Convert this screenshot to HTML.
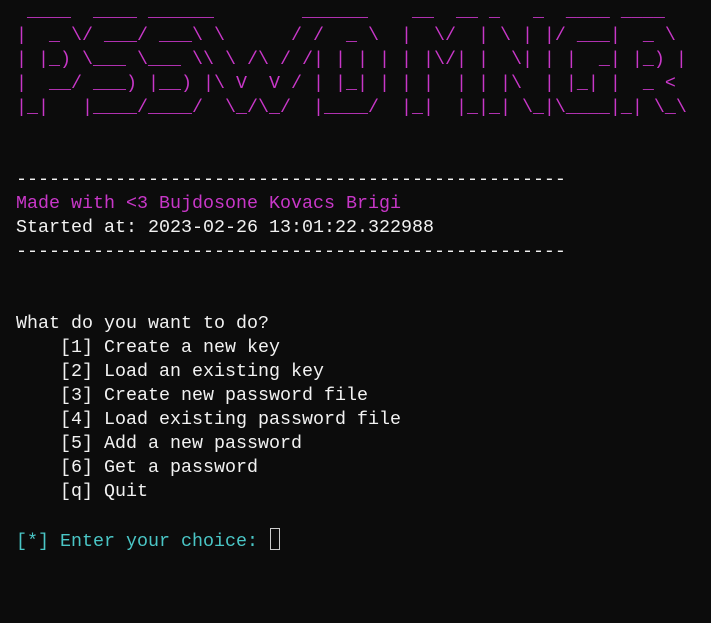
<!DOCTYPE html>
<html><head><meta charset="utf-8"><style>
html,body{margin:0;padding:0;background:#0c0c0c;width:711px;height:623px;overflow:hidden}
pre{margin:0;position:absolute;left:16px;top:0px;font-family:"Liberation Mono",monospace;font-size:18.33px;line-height:24px;color:#f2f2f2;white-space:pre}
.m{color:#c837c8}.c{color:#4ac6c6}
.cur{display:inline-block;width:8px;height:20px;border:1px solid #cccccc;vertical-align:-4px;margin-left:1px}
</style></head><body><pre><span class="m"> ____  ____ ______        ______    __  __ _   _  ____ ____  
|  _ \/ ___/ ___\ \      / /  _ \  |  \/  | \ | |/ ___|  _ \ 
| |_) \___ \___ \\ \ /\ / /| | | | | |\/| |  \| | |  _| |_) |
|  __/ ___) |__) |\ V  V / | |_| | | |  | | |\  | |_| |  _ < 
|_|   |____/____/  \_/\_/  |____/  |_|  |_|_| \_|\____|_| \_\</span>


--------------------------------------------------
<span class="m">Made with &lt;3 Bujdosone Kovacs Brigi</span>
Started at: 2023-02-26 13:01:22.322988
--------------------------------------------------


What do you want to do?
    [1] Create a new key
    [2] Load an existing key
    [3] Create new password file
    [4] Load existing password file
    [5] Add a new password
    [6] Get a password
    [q] Quit

<span class="c">[*] Enter your choice: </span><span class="cur"></span></pre></body></html>
